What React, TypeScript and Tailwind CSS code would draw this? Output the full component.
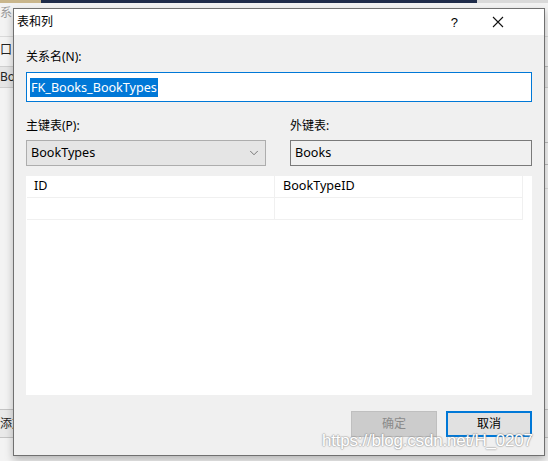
import React from 'react';
import { ChevronDown } from 'lucide-react';

const cjk = '"Noto Sans", "Noto Sans CJK SC", sans-serif';

const App: React.FC = () => {
  return (
    <div
      className="relative w-[548px] h-[461px] overflow-hidden bg-[#f3f3f3] select-none"
      style={{ fontFamily: cjk }}
    >
      {/* Desktop behind the dialog */}
      <div className="flex h-[3px]">
        <div className="w-[41px] bg-[#c9b68c]" />
        <div className="w-[436px] bg-[#1f2c4a]" />
        <div className="flex-1 bg-[#d9d9d9]" />
      </div>
      <div className="absolute left-0 top-[5px] text-[12px] text-[#9a9a9a] leading-[16px]">系</div>
      <div className="absolute left-0 top-[36px] w-full h-px bg-[#dadada]" />
      <div className="absolute left-0 top-[42px] text-[12px] text-[#222] leading-[16px]">口 关</div>
      <div className="absolute left-0 top-[66px] w-full h-[22px] bg-[#e6e6e6] border-y border-[#cfcfcf]" />
      <div className="absolute left-0 top-[69px] text-[12px] text-[#222] leading-[16px]">Boo</div>
      <div className="absolute left-0 top-[409px] w-full h-[29px] bg-[#e9e9e9] border-y border-[#c4c4c4]" />
      <div className="absolute left-0 top-[416px] text-[12px] text-[#222] leading-[16px]">添加</div>
      <div className="absolute right-0 top-[66px] w-[4px] h-px bg-[#bdbdbd]" />
      <div className="absolute right-0 top-[142px] w-[4px] h-px bg-[#bdbdbd]" />
      <div className="absolute right-0 top-[164px] w-[4px] h-px bg-[#bdbdbd]" />
      <div className="absolute right-0 top-[188px] w-[4px] h-px bg-[#dcdcdc]" />

      {/* Dialog window */}
      <div className="absolute left-[13px] top-[8px] w-[532px] h-[448px] bg-[#f0f0f0] border border-[#707070] shadow-[0_4px_8px_rgba(0,0,0,0.25)] flex flex-col text-[12px] text-black">
        <div className="h-[26px] bg-white flex items-center pl-[3px] shrink-0">
          <span className="text-[12px] leading-none">表和列</span>
          <span className="ml-auto mr-[34px] text-[13px] leading-none" style={{ fontFamily: '"Liberation Sans", sans-serif' }}>?</span>
          <svg width="12" height="12" viewBox="0 0 12 12" className="mr-[40px]">
            <path d="M1 1 L11 11 M11 1 L1 11" stroke="#111" strokeWidth="1.1" />
          </svg>
        </div>

        <div className="flex-1 flex flex-col px-[12px] pt-[14px] pb-[18px]">
          <div className="h-[16px] leading-[16px]">关系名(N):</div>
          <div className="mt-[7px] h-[30px] bg-white border border-[#0078d7] flex items-center pl-[3px]">
            <span className="bg-[#0078d7] text-white text-[12.6px] leading-[19px] px-[1px]">FK_Books_BookTypes</span>
          </div>

          <div className="mt-[16px] grid grid-cols-[240px_1fr] gap-x-[24px]">
            <div className="h-[16px] leading-[16px]">主键表(P):</div>
            <div className="h-[16px] leading-[16px]">外键表:</div>
            <div className="mt-[6px] h-[26px] bg-[#e5e5e5] border border-[#adadad] flex items-center pl-[4px] pr-[4px]">
              <span className="text-[12.6px]">BookTypes</span>
              <ChevronDown size={14} strokeWidth={1.3} className="ml-auto text-[#555]" />
            </div>
            <div className="mt-[6px] h-[26px] bg-[#f0f0f0] border border-[#7a7a7a] flex items-center pl-[4px]">
              <span className="text-[12.6px]">Books</span>
            </div>
          </div>

          <div className="mt-[10px] flex-1 bg-white flex flex-col">
            <div className="mr-[9px] ml-px grid grid-cols-[248px_1fr] border-b border-[#f0f0f0] h-[22px]">
              <div className="border-r border-[#f0f0f0] pl-[7px] flex items-center text-[12.6px]">ID</div>
              <div className="border-r border-[#f0f0f0] pl-[8px] flex items-center text-[12.6px]">BookTypeID</div>
            </div>
            <div className="mr-[9px] ml-px grid grid-cols-[248px_1fr] border-b border-[#f0f0f0] h-[22px]">
              <div className="border-r border-[#f0f0f0]" />
              <div className="border-r border-[#f0f0f0]" />
            </div>
          </div>

          <div className="mt-[16px] flex justify-end gap-[9px]">
            <button className="w-[86px] h-[26px] bg-[#cccccc] border border-[#bfbfbf] text-[#8a8a8a] text-[12px]">确定</button>
            <button className="w-[86px] h-[26px] bg-[#e1e1e1] border-2 border-[#0078d7] text-black text-[12px]">取消</button>
          </div>
        </div>
      </div>

      {/* Watermark */}
      <div
        className="absolute left-[322px] top-[430px] text-[17px] leading-[22px] text-white tracking-[-0.2px]"
        style={{
          fontFamily: '"Liberation Sans", Arial, sans-serif',
          textShadow:
            '1px 0 1px rgba(130,130,130,0.35), -1px 0 1px rgba(130,130,130,0.35), 0 1px 1px rgba(130,130,130,0.35), 0 -1px 1px rgba(130,130,130,0.35)',
        }}
      >
        https://blog.csdn.net/H_0207
      </div>
    </div>
  );
};

export default App;
